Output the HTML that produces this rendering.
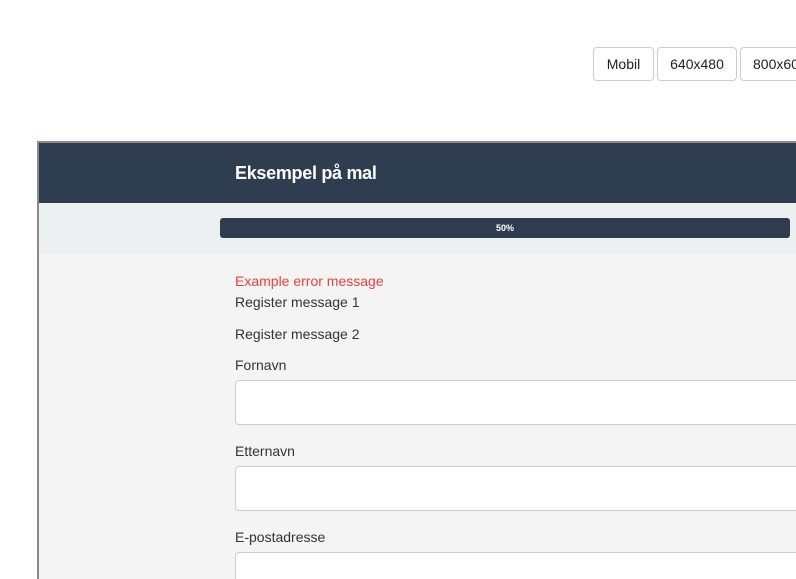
<!DOCTYPE html>
<html><head><style>
html,body{margin:0;width:796px;height:579px;overflow:hidden}
body{background:#fff;font-family:"Liberation Sans",sans-serif;position:relative}
.b{position:absolute;top:47px;height:32px;border:1px solid #ccc;border-radius:4px;background:#fff;font-size:14px;line-height:32px;text-align:center;color:#222;box-sizing:content-box}
.frame{position:absolute;left:37px;top:141px;width:770px;height:460px;border:2px solid #8a8a8a;border-right:none;border-bottom:none;background:#f4f4f4;overflow:hidden}
.hd{position:absolute;left:0;top:0;right:0;height:60px;background:#2e3e50}
.hd span{position:absolute;left:196px;top:20px;color:#fff;font-size:18px;font-weight:bold;letter-spacing:-0.3px}
.pg{position:absolute;left:0;top:60px;right:0;height:51px;background:#ecf0f1}
.bar{position:absolute;left:181px;top:15px;width:570px;height:20px;background:#2e3e50;border-radius:3px;color:#fff;font-size:9px;font-weight:bold;text-align:center;line-height:20px}
.t{position:absolute;left:196px;font-size:14px;color:#333}
.in{position:absolute;left:196px;width:700px;height:43px;background:#fff;border:1px solid #ccc;border-radius:4px}
</style></head><body>
<div class="b" style="left:593px;width:59px">Mobil</div>
<div class="b" style="left:657px;width:78px">640x480</div>
<div class="b" style="left:740px;width:78px;text-align:left;padding-left:12px">800x600</div>
<div class="frame">
<div class="hd"><span>Eksempel på mal</span></div>
<div class="pg"><div class="bar">50%</div></div>
<div class="t" style="top:130px;color:#e8403a">Example error message</div>
<div class="t" style="top:151px">Register message 1</div>
<div class="t" style="top:183px">Register message 2</div>
<div class="t" style="top:214px">Fornavn</div>
<div class="in" style="top:237px"></div>
<div class="t" style="top:300px">Etternavn</div>
<div class="in" style="top:323px"></div>
<div class="t" style="top:386px">E-postadresse</div>
<div class="in" style="top:409px"></div>
</div>
</body></html>
